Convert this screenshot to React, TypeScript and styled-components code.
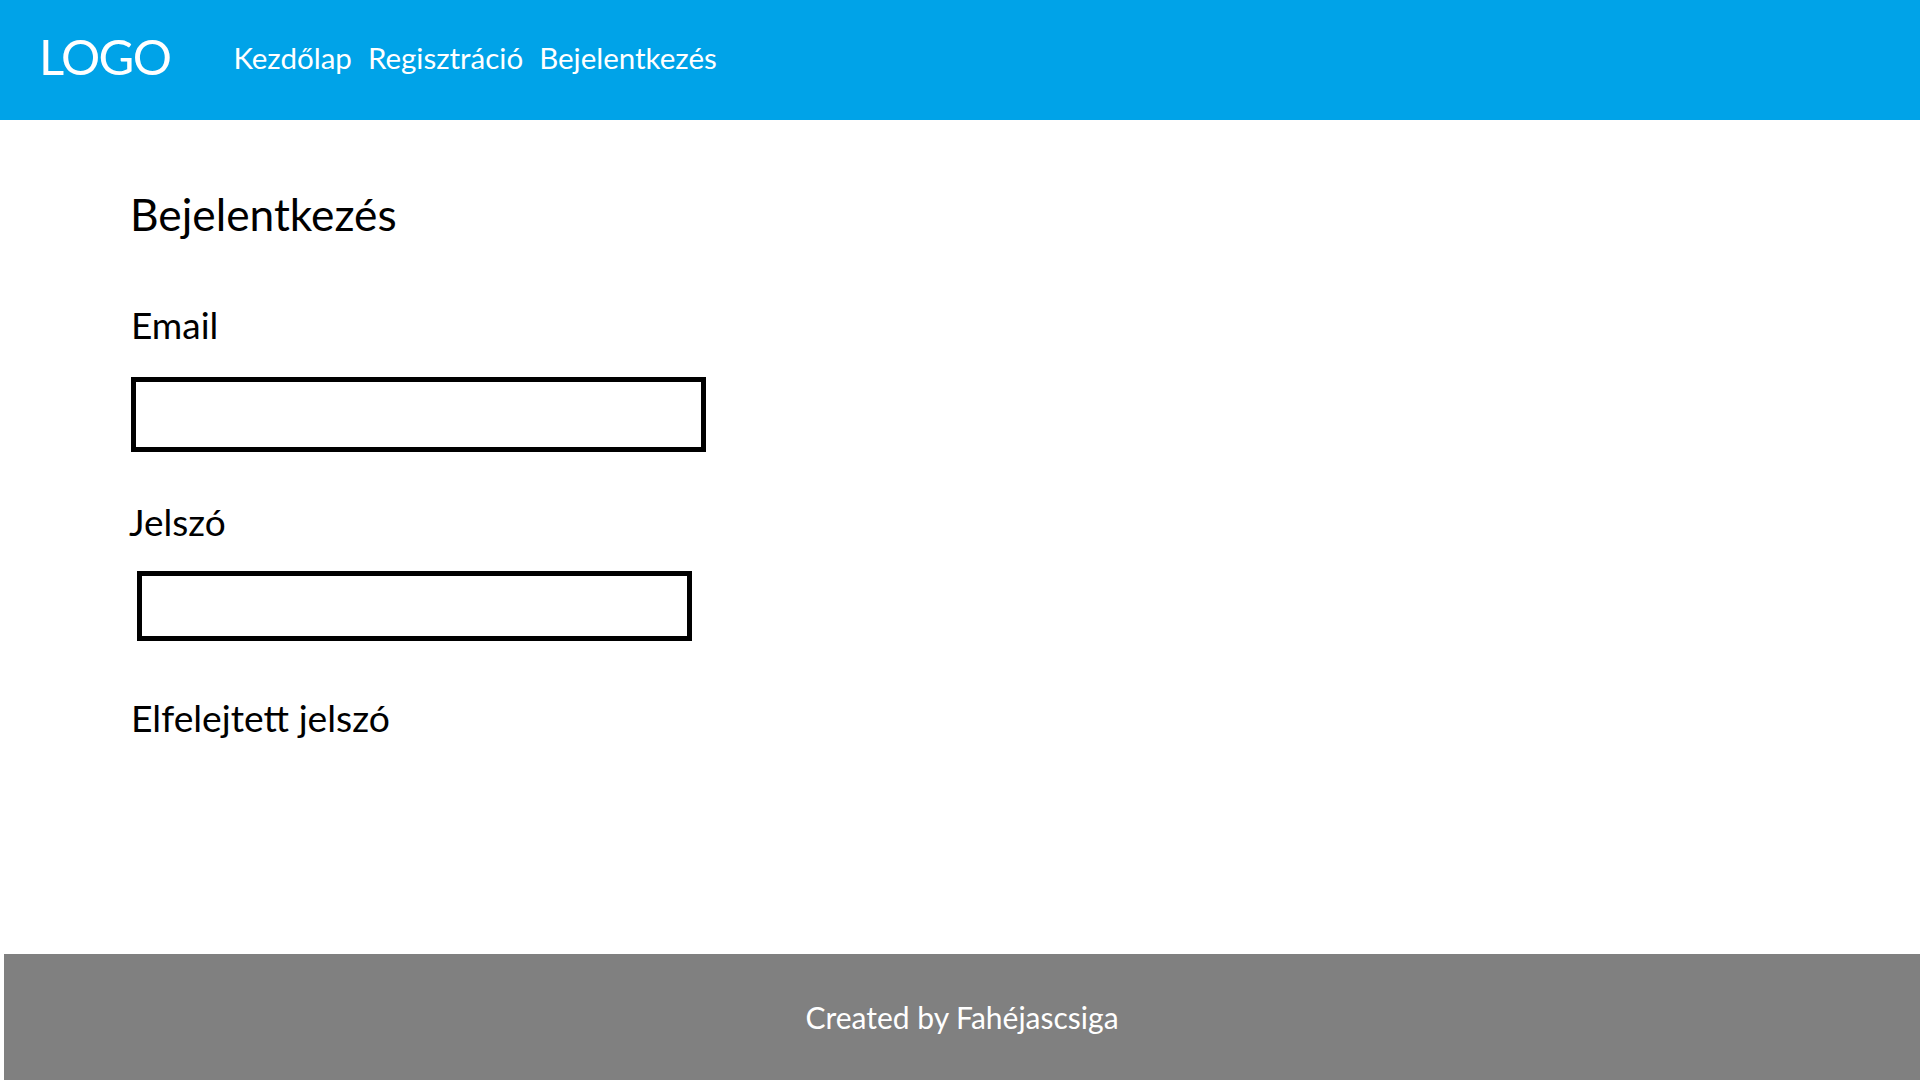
import React from "react";
import styled, { createGlobalStyle } from "styled-components";

const GlobalStyle = createGlobalStyle`
  html, body {
    margin: 0;
    padding: 0;
    background: #ffffff;
  }
  body {
    font-family: Lato, "Open Sans", "Noto Sans", sans-serif;
    color: #000000;
  }
  * { box-sizing: border-box; }
`;

const Page = styled.div`
  display: flex;
  flex-direction: column;
  min-height: 100vh;
`;

const Header = styled.header`
  height: 120px;
  background: #00a3e8;
  display: flex;
  align-items: center;
  padding: 0 0 7px 39px;
  color: #ffffff;
`;

const Logo = styled.div`
  font-size: 49px;
  letter-spacing: -1.6px;
  line-height: 1.2;
  margin-right: 63px;
`;

const Nav = styled.nav`
  display: flex;
  gap: 16px;
  padding-top: 2px;
`;

const NavLink = styled.a`
  font-size: 29.5px;
  line-height: 1.2;
  color: #ffffff;
  text-decoration: none;
  cursor: pointer;
`;

const Main = styled.main`
  flex: 1;
  display: flex;
  flex-direction: column;
  align-items: flex-start;
  padding: 67px 0 0 131px;
`;

const Title = styled.h1`
  font-size: 44.3px;
  font-weight: 400;
  line-height: 1.2;
  margin: 0 0 63px -1px;
`;

const Label = styled.label<{ $after: number; $shift?: number }>`
  font-size: 37px;
  line-height: 1.2;
  margin: 0 0 ${(p) => p.$after}px ${(p) => p.$shift ?? 0}px;
`;

const Field = styled.input<{ $w: number; $h: number; $shift?: number; $after: number }>`
  width: ${(p) => p.$w}px;
  height: ${(p) => p.$h}px;
  border: 5px solid #000000;
  border-radius: 0;
  background: #ffffff;
  outline: none;
  padding: 0 12px;
  font-family: inherit;
  font-size: 28px;
  margin: 0 0 ${(p) => p.$after}px ${(p) => p.$shift ?? 0}px;
`;

const Forgot = styled.a`
  font-size: 37.3px;
  line-height: 1.2;
  color: #000000;
  text-decoration: none;
  cursor: pointer;
`;

const Footer = styled.footer`
  height: 126px;
  margin-left: 4px;
  background: #808080;
  display: flex;
  align-items: center;
  justify-content: center;
  color: #ffffff;
  font-size: 30px;
  line-height: 1.2;
`;

export default function App() {
  return (
    <>
      <GlobalStyle />
      <Page>
        <Header>
          <Logo>LOGO</Logo>
          <Nav>
            <NavLink>Kezdőlap</NavLink>
            <NavLink>Regisztráció</NavLink>
            <NavLink>Bejelentkezés</NavLink>
          </Nav>
        </Header>
        <Main>
          <Title>Bejelentkezés</Title>
          <Label htmlFor="email" $after={29}>Email</Label>
          <Field id="email" type="email" $w={575} $h={75} $after={48} />
          <Label htmlFor="pw" $after={27} $shift={-2}>Jelszó</Label>
          <Field id="pw" type="password" $w={555} $h={70} $shift={6} $after={55} />
          <Forgot>Elfelejtett jelszó</Forgot>
        </Main>
        <Footer>Created by Fahéjascsiga</Footer>
      </Page>
    </>
  );
}
